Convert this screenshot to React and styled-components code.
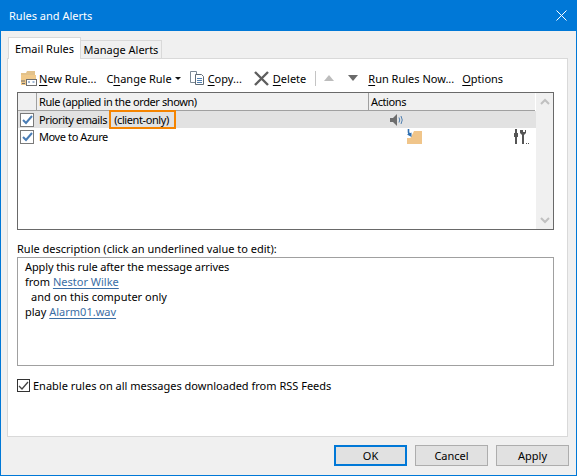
import React from "react";
import styled, { createGlobalStyle } from "styled-components";

const GlobalStyle = createGlobalStyle`
  html, body {
    margin: 0;
    padding: 0;
    background: #f0f0f0;
  }
  * {
    box-sizing: border-box;
  }
`;

const Window = styled.div`
  width: 577px;
  height: 476px;
  display: flex;
  flex-direction: column;
  background: #f0f0f0;
  border: 1px solid #0078d7;
  border-top: 0;
  font-family: "Noto Sans", "Open Sans", sans-serif;
  font-size: 11px;
  color: #000;
  overflow: hidden;
`;

const TitleBar = styled.div`
  height: 31px;
  flex: none;
  display: flex;
  align-items: center;
  justify-content: space-between;
  padding: 0 9px 0 8px;
  background: #0078d7;
  color: #fff;
`;

const Body = styled.div`
  flex: 1;
  display: flex;
  flex-direction: column;
  padding: 6px 8px 0 6px;
`;

const Tabs = styled.div`
  display: flex;
  align-items: flex-end;
  height: 22px;
  padding-left: 1px;
  margin-bottom: -1px;
  position: relative;
  z-index: 1;
`;

const Tab = styled.div`
  height: ${(p) => (p.$active ? "22px" : "19px")};
  width: ${(p) => (p.$active ? "73px" : "82px")};
  display: flex;
  align-items: center;
  justify-content: center;
  white-space: nowrap;
  background: ${(p) => (p.$active ? "#fff" : "#f0f0f0")};
  border: 1px solid #d9d9d9;
  border-bottom: ${(p) => (p.$active ? "0" : "1px solid #d9d9d9")};
  margin-left: ${(p) => (p.$active ? "0" : "-1px")};
`;

const Panel = styled.div`
  height: 379px;
  background: #fff;
  border: 1px solid #d9d9d9;
  padding: 6px 13px 0 9px;
  display: flex;
  flex-direction: column;
`;

const Toolbar = styled.div`
  height: 26px;
  display: flex;
  align-items: center;
  padding-left: 3px;
  margin-bottom: 1px;
`;

const ToolItem = styled.div`
  display: flex;
  align-items: center;
  gap: ${(p) => p.$gap ?? 3}px;
  margin-left: ${(p) => p.$left ?? 0}px;
  white-space: nowrap;
`;

const ToolSep = styled.div`
  width: 1px;
  height: 15px;
  background: #c4c4c4;
  margin-left: 9px;
`;

const Key = styled.span`
  text-decoration: underline;
  text-underline-offset: 2px;
`;

const ListBox = styled.div`
  height: 138px;
  display: flex;
  border: 1px solid #696969;
  background: #fff;
  letter-spacing: -0.4px;
`;

const ListMain = styled.div`
  flex: 1;
  display: flex;
  flex-direction: column;
`;

const HeaderRow = styled.div`
  height: 18px;
  display: grid;
  grid-template-columns: 18px 332px 1fr;
  background: #f0f0f0;
  border-bottom: 1px solid #a0a0a0;
  margin-right: 1px;
`;

const HeaderCell = styled.div`
  display: flex;
  align-items: center;
  padding-left: 2px;
  height: 17px;
  border-left: ${(p) => (p.$first ? "0" : "1px solid #a0a0a0")};
`;

const Row = styled.div`
  height: 17px;
  display: grid;
  grid-template-columns: 19px 353px 16px 107px 1fr;
  grid-template-rows: 17px;
  align-items: center;
  background: ${(p) => (p.$selected ? "#e2e2e2" : "#fff")};

  svg {
    display: block;
  }
`;

const RowCheck = styled.div`
  width: 14px;
  height: 14px;
  margin-left: 2px;
  background: #fff;
  border: 1px solid #7a7a7a;
  display: flex;
  align-items: center;
  justify-content: center;
`;

const RowName = styled.div`
  padding-left: 2px;
  white-space: nowrap;
  display: flex;
  align-items: center;
`;

const Highlight = styled.span`
  position: relative;
  z-index: 1;
  height: 19px;
  margin: -1px 0 -1px 2px;
  display: inline-flex;
  align-items: center;
  padding: 0 5px 0 3px;
  border: 2px solid #f58400;
`;

const ScrollBar = styled.div`
  width: 17px;
  flex: none;
  display: flex;
  flex-direction: column;
  justify-content: space-between;
  align-items: center;
  padding: 5px 0;
  background: #f0f0f0;
`;

const DescLabel = styled.div`
  margin-top: 10px;
  height: 17px;
  line-height: 17px;
`;

const DescBox = styled.div`
  height: 109px;
  border: 1px solid #a0a0a0;
  padding: 1px 7px;
  line-height: 15px;
`;

const DescLine = styled.div`
  height: 15px;
  padding-left: ${(p) => p.$indent ?? 0}px;
  letter-spacing: ${(p) => p.$tight ?? 0}px;
`;

const ValueLink = styled.span`
  color: #3a6ea5;
  text-decoration: underline;
  text-underline-offset: 2px;
`;

const RssRow = styled.div`
  margin-top: 12px;
  display: flex;
  align-items: center;
  gap: 3px;
`;

const RssBox = styled.div`
  width: 13px;
  height: 13px;
  border: 1px solid #333;
  background: #fff;
  display: flex;
  align-items: center;
  justify-content: center;
`;

const Footer = styled.div`
  flex: 1;
  display: flex;
  justify-content: flex-end;
  align-items: flex-start;
  gap: 8px;
  padding-top: 8px;
  margin-right: -1px;
`;

const Button = styled.div`
  width: 73px;
  height: 21px;
  display: flex;
  align-items: center;
  justify-content: center;
  background: #e1e1e1;
  border: ${(p) => (p.$primary ? "2px solid #0078d7" : "1px solid #adadad")};
`;

const Check = ({ color, weight = 2 }) => (
  <svg width="11" height="10" viewBox="0 0 11 10">
    <path d="M1 5 L4 8 L10 1" fill="none" stroke={color} strokeWidth={weight} />
  </svg>
);

const FolderMail = () => (
  <svg width="17" height="17" viewBox="0 0 17 17">
    <path d="M1 3h5l1-2h8v4H1z" fill="#e3c28a" />
    <path d="M1 5h15v6H6v4H1z" fill="#f0c98a" />
    <rect x="6.500" y="9.500" width="10" height="6" fill="#fff" stroke="#6f6f6f" />
    <path d="M8 12h2M12.500 12h2" stroke="#3f6fa8" />
    <path d="M1 11h4M2 13.500h3" stroke="#6f6f6f" />
  </svg>
);

const CopyIcon = () => (
  <svg width="16" height="16" viewBox="0 0 16 16">
    <path d="M1.500 1.500h6v11h-6z" fill="#fff" stroke="#7d8a96" />
    <path d="M6.500 4.500h6l2 2v8h-8z" fill="#fff" stroke="#5f6b76" />
    <path d="M8 8.500h5M8 10.500h5M8 12.500h5" stroke="#4f7fb0" />
  </svg>
);

const DeleteIcon = () => (
  <svg width="17" height="15" viewBox="0 0 17 15">
    <path d="M2 1 L15 14 M15 1 L2 14" stroke="#5e5e5e" strokeWidth="2.400" />
  </svg>
);

const Arrow = ({ up, color }) => (
  <svg width="10" height="6" viewBox="0 0 10 6">
    <path d={up ? "M0 6 L5 0 L10 6z" : "M0 0 L10 0 L5 6z"} fill={color} />
  </svg>
);

const Caret = () => (
  <svg width="6" height="3" viewBox="0 0 6 3">
    <path d="M0 0h6L3 3z" fill="#111" />
  </svg>
);

const Chevron = ({ up }) => (
  <svg width="10" height="7" viewBox="0 0 10 7">
    <path d={up ? "M1 6 L5 2 L9 6" : "M1 1 L5 5 L9 1"} fill="none" stroke="#c0c0c0" strokeWidth="2" />
  </svg>
);

const CloseIcon = () => (
  <svg width="11" height="11" viewBox="0 0 11 11">
    <path d="M.5 .5 L10.500 10.500 M10.500 .5 L.5 10.500" stroke="#fff" strokeWidth="1" />
  </svg>
);

const SpeakerIcon = () => (
  <svg width="14" height="12" viewBox="0 0 14 12">
    <path d="M0 4h3l4-4v12L3 8H0z" fill="#6d6d6d" />
    <path d="M9 3.500q1.500 2.500 0 5M11 2q2.500 4 0 8" fill="none" stroke="#4f7fb0" />
  </svg>
);

const MoveFolderIcon = () => (
  <svg width="17" height="16" viewBox="0 0 17 16">
    <path d="M1 15V9h3.500L8 2h8v13z" fill="#f0c58a" />
    <path d="M2.500 0v3q0 2 2.500 2.500" fill="none" stroke="#2f6fb0" strokeWidth="1.600" />
    <path d="M1 5.500 5.500 8V3.500z" fill="#2f6fb0" />
  </svg>
);

const ToolsIcon = () => (
  <svg width="17" height="16" viewBox="0 0 17 16">
    <path d="M2 0h2v4h1v4H4v7H2V8H1V4h1z" fill="#555" />
    <path d="M7 1v3l2 2v9h2V6l2-2V1l-1 0v2h-2V1z" fill="#555" />
    <path d="M13 14h1v1h-1zM15 14h1v1h-1z" fill="#555" />
  </svg>
);

const RuleRow = ({ selected, name, note, icon, mid, end }) => (
  <Row $selected={selected}>
    <RowCheck>
      <Check color="#4a7db5" />
    </RowCheck>
    <RowName>
      {name}
      {note && <Highlight>{note}</Highlight>}
    </RowName>
    <div>{icon}</div>
    <div>{mid}</div>
    <div>{end}</div>
  </Row>
);

export default function App() {
  return (
    <>
      <GlobalStyle />
      <Window>
        <TitleBar>
          <span>Rules and Alerts</span>
          <CloseIcon />
        </TitleBar>
        <Body>
          <Tabs>
            <Tab $active>Email Rules</Tab>
            <Tab>Manage Alerts</Tab>
          </Tabs>
          <Panel>
            <Toolbar>
              <ToolItem $gap={2}>
                <FolderMail />
                <span>
                  <Key>N</Key>ew Rule...
                </span>
              </ToolItem>
              <ToolItem $left={10}>
                <span>
                  C<Key>h</Key>ange Rule
                </span>
                <Caret />
              </ToolItem>
              <ToolItem $left={8}>
                <CopyIcon />
                <span>
                  <Key>C</Key>opy...
                </span>
              </ToolItem>
              <ToolItem $left={11}>
                <DeleteIcon />
                <span>
                  <Key>D</Key>elete
                </span>
              </ToolItem>
              <ToolSep />
              <ToolItem $left={8}>
                <Arrow up color="#bcbcbc" />
              </ToolItem>
              <ToolItem $left={14}>
                <Arrow color="#6a6a6a" />
              </ToolItem>
              <ToolItem $left={10}>
                <span>
                  <Key>R</Key>un Rules Now...
                </span>
              </ToolItem>
              <ToolItem $left={8}>
                <span>
                  <Key>O</Key>ptions
                </span>
              </ToolItem>
            </Toolbar>
            <ListBox>
              <ListMain>
                <HeaderRow>
                  <HeaderCell $first />
                  <HeaderCell>Rule (applied in the order shown)</HeaderCell>
                  <HeaderCell>Actions</HeaderCell>
                </HeaderRow>
                <RuleRow selected name="Priority emails" note="(client-only)" icon={<SpeakerIcon />} />
                <RuleRow name="Move to Azure" mid={<MoveFolderIcon />} end={<ToolsIcon />} />
              </ListMain>
              <ScrollBar>
                <Chevron up />
                <Chevron />
              </ScrollBar>
            </ListBox>
            <DescLabel>Rule description (click an underlined value to edit):</DescLabel>
            <DescBox>
              <DescLine $tight={-0.1}>Apply this rule after the message arrives</DescLine>
              <DescLine>
                from <ValueLink>Nestor Wilke</ValueLink>
              </DescLine>
              <DescLine $indent={6}>and on this computer only</DescLine>
              <DescLine>
                play <ValueLink>Alarm01.wav</ValueLink>
              </DescLine>
            </DescBox>
            <RssRow>
              <RssBox>
                <Check color="#444" weight={1.3} />
              </RssBox>
              Enable rules on all messages downloaded from RSS Feeds
            </RssRow>
          </Panel>
          <Footer>
            <Button $primary>OK</Button>
            <Button>Cancel</Button>
            <Button>Apply</Button>
          </Footer>
        </Body>
      </Window>
    </>
  );
}
